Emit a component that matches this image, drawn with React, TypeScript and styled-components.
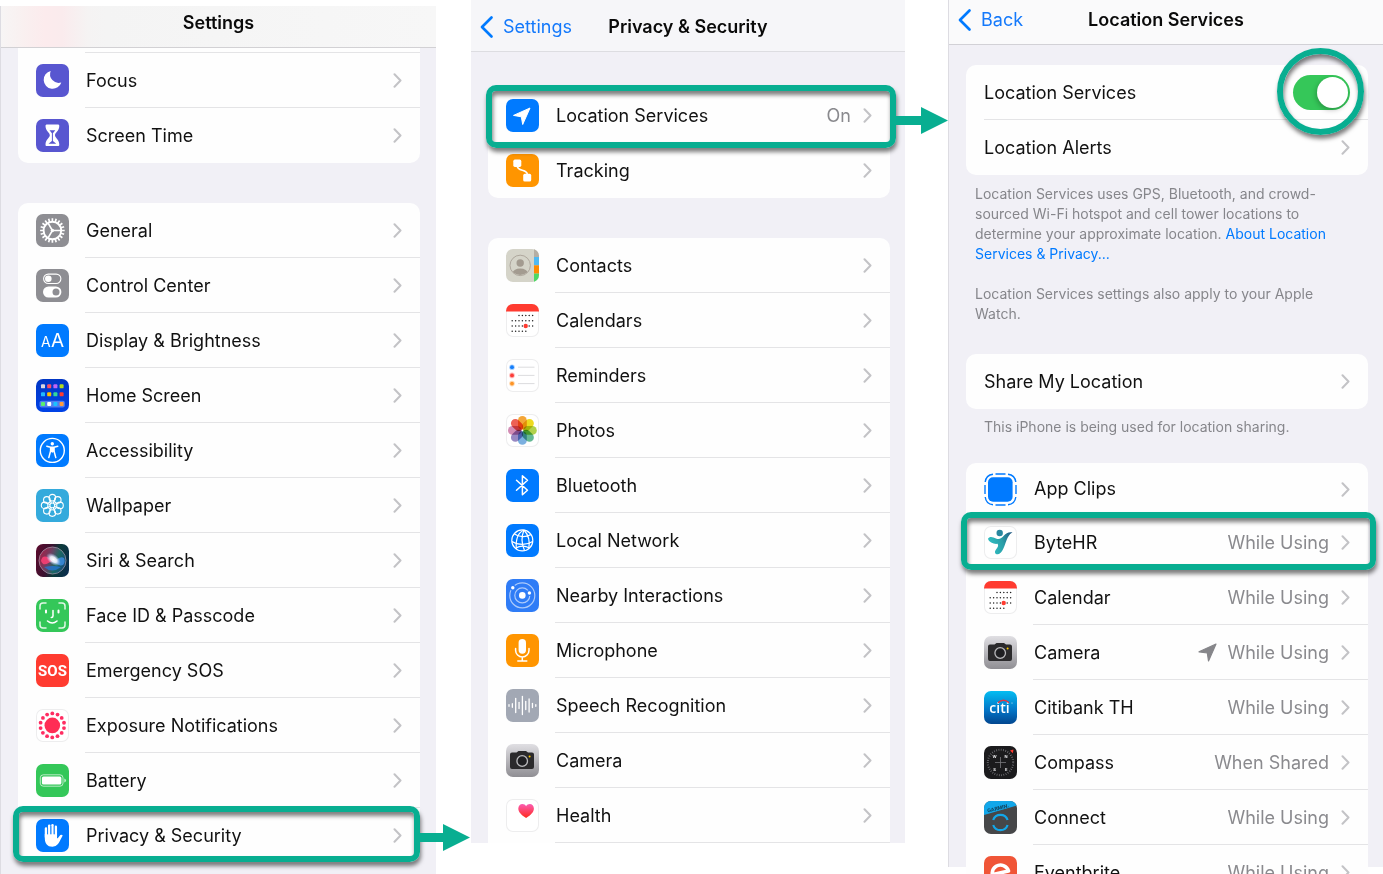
import React from "react";
import styled, { createGlobalStyle } from "styled-components";

const GREEN = "#08ae91";
const BLUE = "#007aff";

const GlobalStyle = createGlobalStyle`
  *, *::before, *::after { box-sizing: border-box; }
  body {
    margin: 0;
    background: #fff;
    color: #111;
    font-family: Inter, "Liberation Sans", sans-serif;
    font-size: 18px;
  }
`;

/* ---------- layout ---------- */

const Page = styled.main`
  display: grid;
  grid-template-columns: 436fr 35fr 434fr 43fr 435fr;
  align-items: start;
  height: 100vh;
  overflow: hidden;
`;

const Panel = styled.section<{ $column: number }>`
  grid-column: ${(p) => p.$column};
  min-width: 0;
  background: #f1f0f6;
`;

const SettingsPanel = styled(Panel)`
  margin-top: 6px;
  height: calc(100vh - 6px);
  border-left: 1px solid #dddce2;
`;

const LocationPanel = styled(Panel)`
  height: calc(100vh - 7px);
  border-left: 1px solid #dddce2;
`;

const Header = styled.header<{ $height: number; $fill: string; $line: string }>`
  display: grid;
  grid-template-columns: 1fr auto 1fr;
  align-items: center;
  height: ${(p) => p.$height}px;
  padding: 0 8px;
  background: ${(p) => p.$fill};
  border-bottom: 1px solid ${(p) => p.$line};
`;

const SettingsHeader = styled(Header)`
  padding-bottom: 8px;
`;

const PrivacyHeader = styled(Header)`
  padding-top: 2px;
`;

const LocationHeader = styled(Header)`
  padding-bottom: 4px;
`;

const Title = styled.h1`
  grid-column: 2;
  margin: 0;
  font-size: 18px;
  line-height: 24px;
  font-weight: 600;
  color: #0a0a0a;
  white-space: nowrap;
`;

const BackLink = styled.a`
  display: flex;
  align-items: center;
  gap: 9px;
  color: #1479fb;
  text-decoration: none;
  line-height: 24px;
`;

const Content = styled.div<{ $top: number; $left: number; $right: number }>`
  display: flex;
  flex-direction: column;
  padding: ${(p) => `${p.$top}px ${p.$right}px 0 ${p.$left}px`};
`;

const Card = styled.ul<{ $openTop?: boolean; $openBottom?: boolean; $gap?: number }>`
  list-style: none;
  margin: 0 0 ${(p) => p.$gap ?? 0}px;
  padding: 0;
  background: #fefefe;
  border-radius: ${(p) => (p.$openTop ? "0 0" : "10px 10px")}
    ${(p) => (p.$openBottom ? "0 0" : "10px 10px")};
`;

const Sliver = styled.li`
  height: 5px;
  margin-left: 67px;
  border-bottom: 1px solid #e4e4e6;
`;

const RowItem = styled.li`
  position: relative;
`;

const RowLink = styled.a<{ $short?: boolean }>`
  display: flex;
  align-items: center;
  gap: 16px;
  height: ${(p) => (p.$short ? 52 : 55)}px;
  padding-left: 18px;
  color: inherit;
  text-decoration: none;
`;

const ToggleRow = styled.label`
  display: flex;
  align-items: center;
  height: 55px;
  padding-left: 18px;
`;

const RowBody = styled.span<{ $line?: boolean; $inset?: boolean }>`
  display: flex;
  flex: 1;
  align-items: center;
  gap: 12px;
  height: 100%;
  padding-left: ${(p) => (p.$inset ? 1 : 0)}px;
  padding-right: 18px;
  box-shadow: ${(p) => (p.$line ? "inset 0 -1px 0 #e4e4e6" : "none")};
`;

const Label = styled.span`
  flex: 1;
  line-height: 24px;
  white-space: nowrap;
`;

const Value = styled.span`
  display: flex;
  align-items: center;
  gap: 10px;
  color: #8a8a8e;
  line-height: 24px;
  white-space: nowrap;
`;

const Footnotes = styled.div`
  display: flex;
  flex-direction: column;
  gap: 20px;
  padding: 9px 16px 30px 9px;
`;

const Note = styled.p`
  margin: 0;
  font-size: 14px;
  line-height: 20px;
  color: #86868b;
`;

const CardNote = styled(Note)`
  padding: 8px 18px 26px;
`;

const NoteLink = styled.a`
  color: ${BLUE};
  text-decoration: none;
`;

const Switch = styled.input`
  appearance: none;
  width: 57px;
  height: 35px;
  margin: 0;
  border-radius: 18px;
  background: #35c759;
  display: flex;
  align-items: center;
  justify-content: flex-end;
  padding: 2px;

  &::before {
    content: "";
    width: 31px;
    height: 31px;
    border-radius: 50%;
    background: #fff;
    box-shadow: -1px 2px 5px rgba(0, 0, 0, 0.25);
  }

  &:not(:checked) {
    justify-content: flex-start;
    background: #e9e9eb;
  }
`;

const SwitchHolder = styled.span`
  position: relative;
  display: flex;
`;

/* ---------- annotations ---------- */

const Highlight = styled.span<{ $inset: string }>`
  position: absolute;
  inset: ${(p) => p.$inset};
  z-index: 2;
  border: 6px solid ${GREEN};
  border-radius: 10px;
  box-shadow: 1px 4px 4px rgba(0, 0, 0, 0.5), inset 1px 4px 4px rgba(0, 0, 0, 0.5);
  pointer-events: none;
`;

const Ring = styled.span`
  position: absolute;
  inset: -27px -14px -25px -16px;
  z-index: 2;
  border: 6px solid ${GREEN};
  border-radius: 50%;
  box-shadow: 1px 4px 4px rgba(0, 0, 0, 0.5), inset 1px 4px 4px rgba(0, 0, 0, 0.5);
  pointer-events: none;
`;

const ArrowBox = styled.svg`
  position: absolute;
  left: calc(100% + 5px);
  top: 50%;
  margin-top: -10px;
`;

const Arrow = ({ length }: { length: number }) => (
  <ArrowBox width={length} height="27" viewBox={`0 0 ${length} 27`}>
    <path d={`M0 9H${length - 27}V0L${length} 13.500L${length - 27} 27V18H0z`} fill={GREEN} />
  </ArrowBox>
);

/* ---------- glyphs ---------- */

const Chevron = () => (
  <svg width="9" height="15" viewBox="0 0 9 15" fill="none" stroke="#c3c3c6" strokeWidth="2">
    <path d="M1.500 1.300L7.500 7.500L1.500 13.700" strokeLinecap="round" strokeLinejoin="round" />
  </svg>
);

const BackChevron = () => (
  <svg width="15" height="24" viewBox="0 0 15 24" fill="none" stroke={BLUE} strokeWidth="2.700">
    <path d="M12.500 2.500L3 12L12.500 21.500" strokeLinecap="round" strokeLinejoin="round" />
  </svg>
);

const ActiveArrow = () => (
  <svg width="19" height="19" viewBox="0 0 19 19">
    <path d="M18 1L10.500 18L9.300 10L1 8.800z" fill="#86868a" stroke="#86868a" strokeWidth="1.200" strokeLinejoin="round" />
  </svg>
);

const IconSvg = styled.svg<{ $fill: string; $outlined?: boolean }>`
  flex: none;
  width: 33px;
  height: 33px;
  border-radius: 7px;
  background: ${(p) => p.$fill};
  box-shadow: ${(p) => (p.$outlined ? "inset 0 0 0 1px #ededee" : "none")};
`;

type TileProps = { fill: string; outlined?: boolean; children: React.ReactNode };
const Tile = ({ fill, outlined, children }: TileProps) => (
  <IconSvg viewBox="0 0 33 33" $fill={fill} $outlined={outlined} fill="none" aria-hidden="true">
    {children}
  </IconSvg>
);

const polar = (cx: number, cy: number, r: number, deg: number): [number, number] => [
  cx + r * Math.cos((deg * Math.PI) / 180),
  cy + r * Math.sin((deg * Math.PI) / 180),
];
const steps = (n: number) => Array.from({ length: n }, (_, i) => i);

const FocusIcon = () => (
  <Tile fill="#5856d0">
    <path d="M14.700 7A9 9 0 1 0 25.300 18.400A8.600 8.600 0 0 1 14.700 7z" fill="#fff" />
  </Tile>
);

const ScreenTimeIcon = () => (
  <Tile fill="#5856d0">
    <path
      d="M10.500 5.500H22.300Q23.400 5.500 23.300 7C23.200 12 19 13.500 19 16.300C19 19 23.200 20.300 23.300 25.500Q23.400 27 22.300 27H10.500Q9.400 27 9.500 25.500C9.600 20.300 13.800 19 13.800 16.300C13.800 13.500 9.600 12 9.500 7Q9.400 5.500 10.500 5.500z"
      fill="#fff"
    />
    <path d="M13.500 11.300H19.300L16.900 14.300V22L20.300 24.800H12.500L15.900 22V14.300z" fill="#5856d0" />
  </Tile>
);

const GeneralIcon = () => (
  <Tile fill="#8e8e93">
    <g stroke="#fff">
      {steps(20).map((i) => {
        const [x1, y1] = polar(16.400, 16.500, 9, i * 18);
        const [x2, y2] = polar(16.400, 16.500, 12.300, i * 18);
        return <line key={i} x1={x1} y1={y1} x2={x2} y2={y2} strokeWidth="1.700" />;
      })}
      <circle cx="16.400" cy="16.500" r="8.800" strokeWidth="1.900" />
      <path d="M16.400 16.500H25M16.400 16.500L12 9M16.400 16.500L12 24" strokeWidth="1.500" />
    </g>
    <circle cx="16.400" cy="16.500" r="1.700" fill="#fff" />
  </Tile>
);

const ControlCenterIcon = () => (
  <Tile fill="#8e8e93">
    <rect x="7.600" y="5.100" width="17.300" height="9.400" rx="4.700" stroke="#fff" strokeWidth="1.100" />
    <circle cx="12.300" cy="9.800" r="3.300" fill="#fff" />
    <rect x="7" y="17.500" width="18.400" height="11" rx="5.500" fill="#fff" />
    <circle cx="20" cy="23" r="3.500" fill="#8e8e93" />
  </Tile>
);

const DisplayIcon = () => (
  <Tile fill={BLUE}>
    <text x="5" y="23" fontSize="14" fill="#fff">A</text>
    <text x="15" y="23" fontSize="19" fill="#fff">A</text>
  </Tile>
);

const homeColors = [
  ["#d9d6e0", "#ff4f64", "#c264f5", "#b3dc1e"],
  ["#1fb8ff", "#ffbf00", "#31d79c", "#ff3b30"],
  ["#5aef6f", "#ffffff", "#1ac1ff", "#ff9a3c"],
];
const HomeIcon = () => (
  <Tile fill="linear-gradient(#0136c4, #0042e6)">
    <rect x="3.500" y="21.700" width="25.300" height="6.800" rx="2" fill="#4f7df0" />
    {homeColors.map((row, r) =>
      row.map((color, c) => (
        <rect key={`${r}${c}`} x={5 + c * 6.200} y={[5.300, 13.300, 23][r]} width="4" height="4" rx="0.900" fill={color} />
      ))
    )}
  </Tile>
);

const AccessibilityIcon = () => (
  <Tile fill={BLUE}>
    <circle cx="16.300" cy="16.400" r="12" stroke="#fff" strokeWidth="1.400" />
    <circle cx="16.300" cy="9.700" r="1.700" fill="#fff" />
    <path
      d="M10.800 12.300L14.600 13.300V17L12.800 23.600M21.800 12.300L18 13.300V17L19.800 23.600M14.600 13.300H18"
      stroke="#fff" strokeWidth="1.500" strokeLinecap="round" strokeLinejoin="round"
    />
    <path d="M14.300 13H18.300V17.500L16.300 18.800L14.300 17.500z" fill="#fff" />
  </Tile>
);

const WallpaperIcon = () => (
  <Tile fill="#34aadc">
    <g stroke="#fff" strokeWidth="1.100">
      {steps(8).map((i) => {
        const [x, y] = polar(16.300, 16.400, 7.700, i * 45);
        const [a, b] = polar(16.300, 16.400, 2.600, i * 45 + 22.500);
        const [c, d] = polar(16.300, 16.400, 5, i * 45 + 22.500);
        return (
          <g key={i}>
            <circle cx={x} cy={y} r="3.300" />
            <line x1={a} y1={b} x2={c} y2={d} />
          </g>
        );
      })}
      <circle cx="16.300" cy="16.400" r="2.400" />
    </g>
  </Tile>
);

const SiriIcon = () => (
  <Tile fill="linear-gradient(105deg, #5c0a2c 0%, #3a1230 40%, #0c3a3a 60%, #0a2a50 100%)">
    <defs>
      <radialGradient id="siri-core">
        <stop offset="0" stopColor="#fff" />
        <stop offset="0.450" stopColor="#f2f4ff" stopOpacity="0.900" />
        <stop offset="1" stopColor="#b0c8ff" stopOpacity="0" />
      </radialGradient>
      <linearGradient id="siri-orb" x1="0" y1="0.300" x2="1" y2="0.700">
        <stop offset="0" stopColor="#e8305f" />
        <stop offset="0.400" stopColor="#8d6a8c" />
        <stop offset="0.650" stopColor="#2a8f82" />
        <stop offset="1" stopColor="#1b5aa8" />
      </linearGradient>
    </defs>
    <circle cx="16.500" cy="16.500" r="13.500" fill="url(#siri-orb)" fillOpacity="0.550" stroke="#a79aae" strokeOpacity="0.700" />
    <path d="M15 17C20 18 24 11 28 14C30 19 27 23 23 21C20 20 18 18 15 17z" fill="#3f8fe6" fillOpacity="0.800" />
    <path d="M5 17C6 10 12 12 17 17C12 18 8 24 5 17z" fill="#ff3f75" fillOpacity="0.850" />
    <path d="M8 23Q16 30 25 23Q17 21 8 23z" fill="#2677db" fillOpacity="0.750" />
    <ellipse cx="17.500" cy="15.500" rx="8.500" ry="5" transform="rotate(38 17.500 15.500)" fill="url(#siri-core)" />
  </Tile>
);

const FaceIcon = () => (
  <Tile fill="#34c759">
    <g stroke="#fff" strokeLinecap="round">
      <path
        d="M4 10V7Q4 4 7 4H10M23 4H26Q29 4 29 7V10M29 23V26Q29 29 26 29H23M10 29H7Q4 29 4 26V23"
        strokeWidth="1.500" strokeOpacity="0.850"
      />
      <path d="M10 11.500V13.500M22.500 11.500V13.500" strokeWidth="2" />
      <path d="M17 11.500V17Q17 18.500 15.300 18.500" strokeWidth="1.500" />
      <path d="M11.500 22Q16.300 26 21 22" strokeWidth="1.600" />
    </g>
  </Tile>
);

const SosIcon = () => (
  <Tile fill="#ff3b30">
    <text x="16.500" y="22" textAnchor="middle" fontFamily="Liberation Sans Narrow, Roboto, sans-serif" fontSize="15" fontWeight="700" fill="#fff">SOS</text>
  </Tile>
);

const ExposureIcon = () => (
  <Tile fill="#fff" outlined>
    <circle cx="16.300" cy="16.400" r="7.800" fill="#ff2d55" />
    {steps(14).map((i) => {
      const [x, y] = polar(16.300, 16.400, 12, i * (360 / 14) + 13);
      return <circle key={i} cx={x} cy={y} r="1.900" fill="#ff2d62" />;
    })}
  </Tile>
);

const BatteryIcon = () => (
  <Tile fill="#34c759">
    <rect x="4.300" y="10.800" width="22.700" height="11.400" rx="3" stroke="#fff" strokeOpacity="0.650" strokeWidth="1" />
    <rect x="5.900" y="12.400" width="19.500" height="8.200" rx="1.600" fill="#fff" />
    <path d="M28.300 14.500Q30 15.200 30 16.500Q30 17.800 28.300 18.500z" fill="#fff" fillOpacity="0.700" />
  </Tile>
);

const HandIcon = () => (
  <Tile fill={BLUE}>
    <g stroke="#fff" strokeWidth="2.500" strokeLinecap="round">
      <path d="M10 9.500V18M13.200 6.800V17M16.500 6.200V17M19.800 7.800V18" />
    </g>
    <path
      d="M8.800 15H21V19.500Q22.500 18.500 23.500 17C24.500 15.500 26 15.600 26.700 16.600C25 19.500 24 22.500 22 25Q19.700 27.800 16.500 27.800C11 27.800 8.800 24 8.800 19z"
      fill="#fff"
    />
    <path d="M11.600 9V15.500M14.900 7V15.500M18.200 7V15.500" stroke={BLUE} strokeWidth="0.700" />
  </Tile>
);

const LocationIcon = () => (
  <Tile fill={BLUE}>
    <path d="M24 9L16.700 25.500L15.300 17.800L7.500 16.400z" fill="#fff" stroke="#fff" strokeWidth="1" strokeLinejoin="round" />
  </Tile>
);

const TrackingIcon = () => (
  <Tile fill="#ff9500">
    <rect x="7.300" y="5.600" width="8" height="7.300" rx="1.600" fill="#fff" />
    <rect x="17.200" y="19.800" width="8" height="7.800" rx="1.600" fill="#fff" />
    <path d="M11.300 12C11.300 18 21.300 14.500 21.300 20.500" stroke="#fff" strokeWidth="1.600" />
  </Tile>
);

const ContactsIcon = () => (
  <Tile fill="#d5d4c9">
    <rect x="28" y="0" width="5" height="8" fill="#b5aea3" />
    <rect x="28" y="8" width="5" height="8.300" fill="#4fb9f2" />
    <rect x="28" y="16.300" width="5" height="8.300" fill="#ff8a00" />
    <rect x="28" y="24.600" width="5" height="9" fill="#4cd964" />
    <clipPath id="contact-disc"><circle cx="14.200" cy="16.400" r="9.600" /></clipPath>
    <circle cx="14.200" cy="16.400" r="10.200" stroke="#a9a297" strokeWidth="0.900" />
    <circle cx="14.200" cy="14" r="3.700" fill="#a39b90" />
    <ellipse cx="14.200" cy="24.300" rx="7.800" ry="4.800" fill="#a39b90" clipPath="url(#contact-disc)" />
  </Tile>
);

const calendarRows = [
  [2, 6, 11.500],
  [0, 6, 16.800],
  [0, 6, 22],
  [0, 4, 27.300],
];
const CalendarIcon = () => (
  <Tile fill="#fff" outlined>
    <rect width="33" height="7.500" fill="#ff3b30" />
    {calendarRows.map(([from, to, y]) =>
      steps(7)
        .filter((i) => i >= from && i <= to)
        .map((i) => <circle key={`${y}${i}`} cx={6.200 + i * 3.400} cy={y} r="0.750" fill="#222" />)
    )}
    <circle cx="19.700" cy="22" r="2.200" fill="#ff3b30" />
  </Tile>
);

const RemindersIcon = () => (
  <Tile fill="#fff" outlined>
    {["#147efb", "#fc3d39", "#fd9426"].map((color, i) => (
      <g key={color}>
        <circle cx="6" cy={8.200 + i * 8.200} r="2.800" fill={color} fillOpacity="0.350" />
        <circle cx="6" cy={8.200 + i * 8.200} r="1.900" fill={color} />
        <line x1="12" x2="28.500" y1={8.200 + i * 8.200} y2={8.200 + i * 8.200} stroke="#d8d8da" strokeWidth="0.900" />
      </g>
    ))}
  </Tile>
);

const petals = ["#f39a1d", "#ecd500", "#a6cb32", "#4fae85", "#69a5dc", "#8a79bb", "#cd7dab", "#ea4b3c"];
const PetalShape = styled.rect`
  mix-blend-mode: multiply;
`;
const PhotosIcon = () => (
  <Tile fill="#fff" outlined>
    {petals.map((color, i) => (
      <PetalShape
        key={color} x="12" y="2" width="8.800" height="13.600" rx="4.400"
        fill={color} fillOpacity="0.880" transform={`rotate(${i * 45} 16.400 16.400)`}
      />
    ))}
  </Tile>
);

const BluetoothIcon = () => (
  <Tile fill={BLUE}>
    <path d="M10.500 11.300L21.500 21.300L16.400 25.700V6.800L21.500 11.300L10.500 21.300" stroke="#fff" strokeWidth="1.500" strokeLinejoin="round" strokeLinecap="round" />
  </Tile>
);

const NetworkIcon = () => (
  <Tile fill={BLUE}>
    <g stroke="#fff" strokeWidth="1.200">
      <circle cx="16.300" cy="16.400" r="10.500" />
      <path d="M18 6C12 8.500 9.500 14 10.300 25M18 6C15.500 12 15.500 20 18.500 26.500M18 6C22.500 11 24.200 17 22.800 24.500" />
      <path d="M8.200 9.800C13 13.500 20 13.500 25 10.500M6 17.500C12 21.500 21 21.300 26.700 17.500M9.500 24.300C14 21.500 19 21.500 23.500 24" />
    </g>
  </Tile>
);

const NearbyIcon = () => (
  <Tile fill="#2f7cf6">
    <circle cx="16.300" cy="16.400" r="3.300" fill="#fff" />
    <circle cx="16.300" cy="16.400" r="7.500" stroke="#fff" strokeOpacity="0.600" strokeWidth="1.200" />
    <circle cx="16.300" cy="16.400" r="12.500" stroke="#fff" strokeOpacity="0.600" strokeWidth="1.200" />
    <circle cx="6.800" cy="8.800" r="3" fill="#2f7cf6" />
    <circle cx="6.800" cy="8.800" r="1.700" fill="#fff" />
    <circle cx="23.400" cy="14" r="2.900" fill="#2f7cf6" />
    <circle cx="23.400" cy="14" r="1.700" fill="#fff" />
  </Tile>
);

const MicIcon = () => (
  <Tile fill="#ff9500">
    <rect x="12.600" y="5" width="7.400" height="14.800" rx="3.700" fill="#fff" />
    <path d="M9.600 14.500V16.300A6.700 6.700 0 0 0 23 16.300V14.500M16.300 23V26.800M11.800 26.900H20.800" stroke="#fff" strokeWidth="1.500" strokeLinecap="round" />
  </Tile>
);

const waveHeights = [1.500, 3.500, 14, 6, 18, 8, 13, 4, 1.500];
const SpeechIcon = () => (
  <Tile fill="#a2a8b4">
    {waveHeights.map((h, i) => (
      <line
        key={i} x1={3 + i * 3.350} x2={3 + i * 3.350} y1={16.500 - h / 2} y2={16.500 + h / 2}
        stroke="#fff" strokeWidth="1.300" strokeLinecap="round"
      />
    ))}
  </Tile>
);

const CameraIcon = () => (
  <Tile fill="linear-gradient(#e0dfe3, #8f8e93)">
    <path
      d="M6 8.500H10.500L12.500 6.900H20L22 8.500H26Q28 8.500 28 10.500V23Q28 25 26 25H6Q4 25 4 23V10.500Q4 8.500 6 8.500z"
      fill="#2b2a2c"
    />
    <circle cx="16.200" cy="17" r="5.300" stroke="#b8b8bb" strokeWidth="1.300" />
    <circle cx="16.200" cy="17" r="4" fill="#1f1f22" />
    <circle cx="23.600" cy="12.600" r="1" fill="#ffcc00" />
  </Tile>
);

const HealthIcon = () => (
  <Tile fill="#fff" outlined>
    <defs>
      <linearGradient id="heart" x1="0" y1="0" x2="0" y2="1">
        <stop offset="0" stopColor="#fb5cb2" />
        <stop offset="1" stopColor="#ff2a1c" />
      </linearGradient>
    </defs>
    <path
      d="M20.100 19C15 15.800 12.300 13 12.300 9.500C12.300 6.800 14.200 5 16.400 5C18 5 19.400 5.900 20.100 7.300C20.800 5.900 22.200 5 23.800 5C26 5 27.900 6.800 27.900 9.500C27.900 13 25.200 15.800 20.100 19z"
      fill="url(#heart)"
    />
  </Tile>
);

const AppClipsIcon = () => (
  <Tile fill="transparent">
    <rect x="4" y="4.200" width="24.600" height="24.600" rx="5" fill={BLUE} />
    <path
      d="M11.500 1H21.500M24 1.200Q31 2 31.800 9M32 12V21M31.800 24Q31 31 24 31.800M21.500 32H11.500M9 31.800Q2 31 1.200 24M1 21V12M1.200 9Q2 2 9 1.200"
      stroke={BLUE} strokeWidth="1.400"
    />
  </Tile>
);

const ByteIcon = () => (
  <Tile fill="#fff" outlined>
    <defs>
      <linearGradient id="byte" x1="0" y1="0.500" x2="1" y2="0.200">
        <stop offset="0" stopColor="#2fc0c4" />
        <stop offset="0.550" stopColor="#2a9fa8" />
        <stop offset="1" stopColor="#235b84" />
      </linearGradient>
    </defs>
    <circle cx="15.700" cy="7" r="3.200" fill="#28879f" />
    <path
      d="M4 12.800C5.500 9.800 9 11 12 12.500C15 14 17.500 12.500 20 9.500C22 6.800 25.500 5.500 28.500 6.500C24.500 8.500 23.500 12 21.500 17C20 21.500 18 27.500 14 28.300C11 28.500 10 26 12 23.500C14 21 14.800 19.500 13.500 17.800C10 18.300 5 16.500 4 12.800z"
      fill="url(#byte)"
    />
  </Tile>
);

const CitiIcon = () => (
  <Tile fill="linear-gradient(#04bdf2, #0372c4 60%, #02468f)">
    <text x="15.500" y="22" textAnchor="middle" fontFamily="Open Sans, Inter, sans-serif" fontSize="14" fontWeight="600" fill="#fff">citi</text>
    <path d="M14 11.800Q19.500 6.800 25 11.800" stroke="#e5353f" strokeWidth="1.500" />
    <circle cx="28" cy="12" r="0.500" fill="#fff" />
  </Tile>
);

const CompassIcon = () => (
  <Tile fill="#1b1b1d">
    <circle cx="16.500" cy="16.500" r="12.700" stroke="#77777b" strokeWidth="2" strokeDasharray="0.700 1.600" />
    <path d="M16.500 11V22M11 16.500H22" stroke="#77777b" strokeWidth="0.800" />
    <g fill="#e8e8ea" fontSize="4" fontWeight="700">
      <text x="8.500" y="12">W</text>
      <text x="20.500" y="12">N</text>
      <text x="9.300" y="24.500">S</text>
      <text x="21" y="24.500">E</text>
    </g>
    <path d="M29.500 3.500L28.800 7.300L26 4.600z" fill="#ff3b30" />
  </Tile>
);

const ConnectIcon = () => (
  <Tile fill="#464749">
    <path d="M0 0H33V4.500L0 14z" fill="#12a7ea" />
    <text x="3.800" y="11.500" fontSize="5" fontWeight="700" fill="#123c54" transform="rotate(-14 3.800 11.500)">GARMIN.</text>
    <path d="M9.200 19A7.600 7.600 0 0 1 23.600 19M9.200 24A7.600 7.600 0 0 0 23.600 24" stroke="#12a7ea" strokeWidth="2.200" />
  </Tile>
);

const EventbriteIcon = () => (
  <Tile fill="#f05537">
    <path d="M9 18.500L24.500 15A8.300 8.300 0 1 0 24 21" stroke="#fff" strokeWidth="3.600" strokeLinejoin="round" />
  </Tile>
);

/* ---------- rows ---------- */

type RowData = {
  label: string;
  icon?: React.ReactNode;
  value?: string;
  active?: boolean;
  short?: boolean;
  mark?: { inset: string; arrow?: number };
};

const Row = ({ row, line }: { row: RowData; line: boolean }) => (
  <RowItem>
    <RowLink href="#" $short={row.short}>
      {row.icon}
      <RowBody $line={line} $inset={Boolean(row.icon)}>
        <Label>{row.label}</Label>
        {row.value && (
          <Value>
            {row.active && <ActiveArrow />}
            {row.value}
          </Value>
        )}
        <Chevron />
      </RowBody>
    </RowLink>
    {row.mark && (
      <Highlight $inset={row.mark.inset}>
        {row.mark.arrow && <Arrow length={row.mark.arrow} />}
      </Highlight>
    )}
  </RowItem>
);

const Rows = ({ rows, open }: { rows: RowData[]; open?: boolean }) => (
  <>
    {rows.map((row, i) => (
      <Row key={row.label} row={row} line={open || i < rows.length - 1} />
    ))}
  </>
);

const focusRows: RowData[] = [
  { label: "Focus", icon: <FocusIcon /> },
  { label: "Screen Time", icon: <ScreenTimeIcon /> },
];

const settingsRows: RowData[] = [
  { label: "General", icon: <GeneralIcon /> },
  { label: "Control Center", icon: <ControlCenterIcon /> },
  { label: "Display & Brightness", icon: <DisplayIcon /> },
  { label: "Home Screen", icon: <HomeIcon /> },
  { label: "Accessibility", icon: <AccessibilityIcon /> },
  { label: "Wallpaper", icon: <WallpaperIcon /> },
  { label: "Siri & Search", icon: <SiriIcon /> },
  { label: "Face ID & Passcode", icon: <FaceIcon /> },
  { label: "Emergency SOS", icon: <SosIcon /> },
  { label: "Exposure Notifications", icon: <ExposureIcon /> },
  { label: "Battery", icon: <BatteryIcon /> },
  { label: "Privacy & Security", icon: <HandIcon />, mark: { inset: "-2px 0 1px -5px", arrow: 51 } },
];

const trackingRows: RowData[] = [
  { label: "Location Services", icon: <LocationIcon />, value: "On", mark: { inset: "-3px -6px -5px -2px", arrow: 53 } },
  { label: "Tracking", icon: <TrackingIcon /> },
];

const privacyRows: RowData[] = [
  { label: "Contacts", icon: <ContactsIcon /> },
  { label: "Calendars", icon: <CalendarIcon /> },
  { label: "Reminders", icon: <RemindersIcon /> },
  { label: "Photos", icon: <PhotosIcon /> },
  { label: "Bluetooth", icon: <BluetoothIcon /> },
  { label: "Local Network", icon: <NetworkIcon /> },
  { label: "Nearby Interactions", icon: <NearbyIcon /> },
  { label: "Microphone", icon: <MicIcon /> },
  { label: "Speech Recognition", icon: <SpeechIcon /> },
  { label: "Camera", icon: <CameraIcon /> },
  { label: "Health", icon: <HealthIcon /> },
];

const appRows: RowData[] = [
  { label: "App Clips", icon: <AppClipsIcon />, short: true },
  { label: "ByteHR", icon: <ByteIcon />, value: "While Using", mark: { inset: "-3px -8px 0 -5px" } },
  { label: "Calendar", icon: <CalendarIcon />, value: "While Using" },
  { label: "Camera", icon: <CameraIcon />, value: "While Using", active: true },
  { label: "Citibank TH", icon: <CitiIcon />, value: "While Using" },
  { label: "Compass", icon: <CompassIcon />, value: "When Shared" },
  { label: "Connect", icon: <ConnectIcon />, value: "While Using" },
  { label: "Eventbrite", icon: <EventbriteIcon />, value: "While Using" },
];

export default function App() {
  return (
    <>
      <GlobalStyle />
      <Page>
        <SettingsPanel $column={1}>
          <SettingsHeader
            $height={42}
            $fill="linear-gradient(90deg, #f7f5f5 0%, #f9f0f0 5%, #fcebed 10%, #faebed 14%, #f5f3f3 20%, #f4f4f4 24%, #f7f7f7 100%)"
            $line="#d2d1d4"
          >
            <Title>Settings</Title>
          </SettingsHeader>
          <Content $top={0} $left={17} $right={16}>
            <Card $openTop $gap={40}>
              <Sliver />
              <Rows rows={focusRows} />
            </Card>
            <Card>
              <Rows rows={settingsRows} />
            </Card>
          </Content>
        </SettingsPanel>

        <Panel $column={3}>
          <PrivacyHeader $height={52} $fill="#f6f6f9" $line="#dddde1">
            <BackLink href="#">
              <BackChevron />
              Settings
            </BackLink>
            <Title>Privacy &amp; Security</Title>
          </PrivacyHeader>
          <Content $top={36} $left={17} $right={15}>
            <Card $gap={40}>
              <Rows rows={trackingRows} />
            </Card>
            <Card $openBottom>
              <Rows rows={privacyRows} open />
            </Card>
          </Content>
        </Panel>

        <LocationPanel $column={5}>
          <LocationHeader $height={45} $fill="#fafafb" $line="#d2d1d6">
            <BackLink href="#">
              <BackChevron />
              Back
            </BackLink>
            <Title>Location Services</Title>
          </LocationHeader>
          <Content $top={20} $left={17} $right={15}>
            <Card>
              <RowItem>
                <ToggleRow>
                  <RowBody $line>
                    <Label>Location Services</Label>
                    <SwitchHolder>
                      <Switch type="checkbox" role="switch" defaultChecked />
                      <Ring />
                    </SwitchHolder>
                  </RowBody>
                </ToggleRow>
              </RowItem>
              <Rows rows={[{ label: "Location Alerts" }]} />
            </Card>
            <Footnotes>
              <Note>
                Location Services uses GPS, Bluetooth, and crowd-sourced Wi-Fi hotspot and cell tower
                locations to determine your approximate location.{" "}
                <NoteLink href="#">About Location Services &amp; Privacy...</NoteLink>
              </Note>
              <Note>Location Services settings also apply to your Apple Watch.</Note>
            </Footnotes>
            <Card>
              <Rows rows={[{ label: "Share My Location" }]} />
            </Card>
            <CardNote>This iPhone is being used for location sharing.</CardNote>
            <Card $openBottom>
              <Rows rows={appRows} open />
            </Card>
          </Content>
        </LocationPanel>
      </Page>
    </>
  );
}
